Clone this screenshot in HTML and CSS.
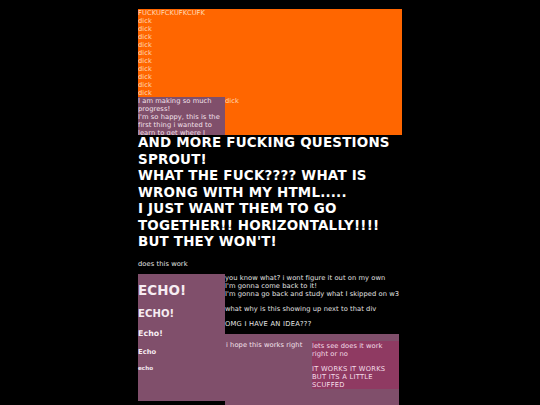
FILE: index.html
```html
<!DOCTYPE html>
<html>
<head>
<meta charset="utf-8">
<link rel="stylesheet" href="styles.css">
</head>
<body>
<div class="page">
  <div class="orange">
    FUCKUFCKUFKCUFK<br>dick<br>dick<br>dick<br>dick<br>dick<br>dick<br>dick<br>dick<br>dick<br>dick<br>
    <div class="note">I am making so much progress!<br>I'm so happy, this is the first thing i wanted to learn to get where I</div>
    dick
  </div>
  <h1 class="rant">AND MORE FUCKING QUESTIONS SPROUT!<br>WHAT THE FUCK???? WHAT IS WRONG WITH MY HTML.....<br>I JUST WANT THEM TO GO TOGETHER!! HORIZONTALLY!!!! BUT THEY WON'T!</h1>
  <p class="line">does this work</p>
  <div class="row">
    <div class="echo">
      <h1 class="e1">ECHO!</h1>
      <h2 class="e2">ECHO!</h2>
      <h3 class="e3">Echo!</h3>
      <h4 class="e4">Echo</h4>
      <h5 class="e5">echo</h5>
    </div>
    <div class="side">
      <p class="line">you know what? i wont figure it out on my own<br>I'm gonna come back to it!<br>I'm gonna go back and study what I skipped on w3</p>
      <p class="line">what why is this showing up next to that div</p>
      <p class="line caps">OMG I HAVE AN IDEA???</p>
      <div class="idea">
        <div class="hope">i hope this works right</div>
        <div class="pink">
          <p class="pline">lets see does it work right or no</p>
          <p class="pline caps">IT WORKS IT WORKS BUT ITS A LITTLE SCUFFED</p>
        </div>
      </div>
    </div>
  </div>
</div>
</body>
</html>
```

FILE: styles.css
```css
html, body {
  margin: 0;
  padding: 0;
  background: #000;
}

body {
  font-family: "DejaVu Sans", Verdana, sans-serif;
  font-size: 6.72px;
  line-height: 8px;
  letter-spacing: 0.06px;
  color: #e2e2e2;
}

.page {
  width: 264px;
  margin: 9px auto 0;
}

.orange {
  background: #ff6600;
  color: #ffd9b3;
  height: 126px;
  overflow: hidden;
}

.note {
  float: left;
  width: 87px;
  height: 38px;
  overflow: hidden;
  background: #804f6b;
  color: #f3e2ec;
}

.rant {
  margin: 0 0 9px;
  font-size: 13.44px;
  line-height: 16.5px;
  letter-spacing: 0.2px;
  font-weight: bold;
  color: #fff;
}

.line {
  margin: 0 0 6.7px;
}

.caps {
  letter-spacing: 0.25px;
}

.row {
  display: flex;
  align-items: flex-start;
}

.echo {
  width: 87px;
  height: 126.5px;
  flex: none;
  background: #804f6b;
  color: #f6ecf2;
}

.echo .e1, .echo .e2, .echo .e3, .echo .e4, .echo .e5 {
  font-weight: bold;
}

.e1 { font-size: 13.44px; line-height: 16.3px; margin: 9px 0; }
.e2 { font-size: 10.08px; line-height: 12.2px; margin: 8.4px 0; }
.e3 { font-size: 7.86px; line-height: 9.6px; margin: 7.9px 0; }
.e4 { font-size: 6.72px; line-height: 8.1px; margin: 8.9px 0; }
.e5 { font-size: 5.58px; line-height: 6.8px; margin: 9.3px 0; }

.side {
  flex: 1;
  min-width: 0;
}

.idea {
  width: 174px;
  height: 120px;
  padding-top: 6.7px;
  background: #804f6b;
  color: #f3e2ec;
  display: flex;
  align-items: flex-start;
}

.hope {
  flex: 1;
  padding-left: 1px;
}

.pink {
  width: 87px;
  flex: none;
  background: #8f3a62;
  color: #f3dde8;
  padding-top: 1px;
}

.pline {
  margin: 0 0 6.7px;
}

.pline:last-child {
  margin-bottom: 0;
}
```
